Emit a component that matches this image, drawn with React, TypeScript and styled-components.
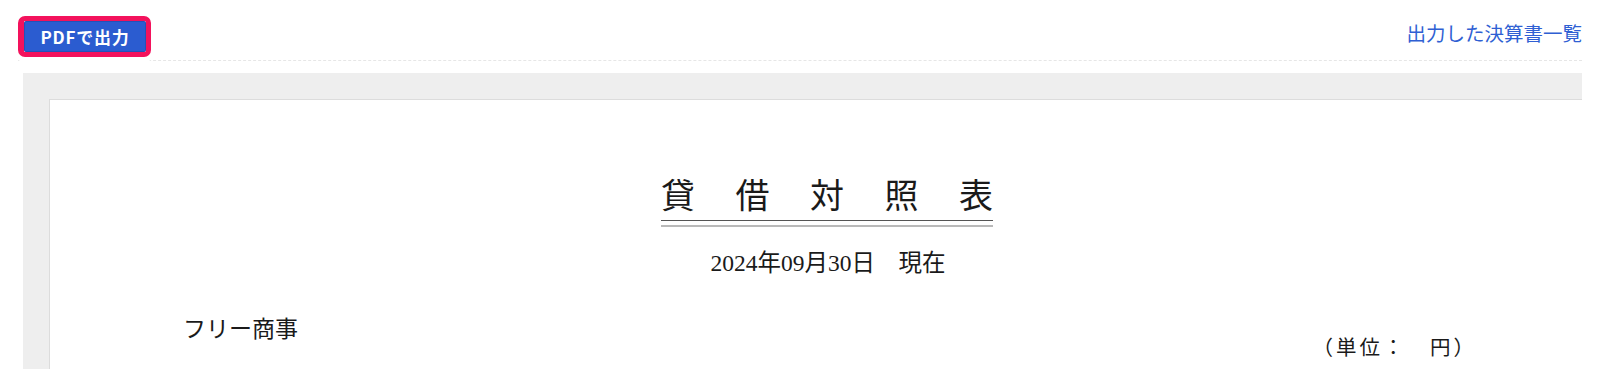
import React from "react";
import styled, { createGlobalStyle } from "styled-components";

const GlobalStyle = createGlobalStyle`
  html, body {
    margin: 0;
    padding: 0;
    background: #fff;
    font-family: "Noto Sans CJK JP", "Liberation Sans", sans-serif;
  }
`;

const Page = styled.div`
  padding: 16px 18px 0 18px;
  height: 369px;
  box-sizing: border-box;
  overflow: hidden;
`;

const Header = styled.div`
  display: flex;
  justify-content: space-between;
  align-items: center;
  height: 45px;
  border-bottom: 1px dashed #e6e6e6;
  box-sizing: border-box;
`;

const Highlight = styled.div`
  display: inline-flex;
  align-self: flex-start;
  border: 5px solid #f3125c;
  border-left-width: 6px;
  border-radius: 7px;
  box-shadow: 0 0 0 5px #fff;
  background: #fff;
`;

const PdfButton = styled.button`
  width: 122px;
  height: 31px;
  padding: 0;
  border: 1px solid #2352b8;
  border-radius: 2px;
  background: #2b5cd0;
  color: #fff;
  font-family: "Noto Sans CJK JP", sans-serif;
  font-weight: 700;
  font-size: 17px;
  letter-spacing: 0.8px;
  line-height: 1;
  cursor: pointer;
`;

const ListLink = styled.a`
  color: #2f5fd3;
  font-size: 19.5px;
  line-height: 1;
  text-decoration: none;
  margin-bottom: 10px;
  font-family: "Noto Sans CJK JP", sans-serif;
`;

const Viewer = styled.div`
  margin: 12px 0 0 5px;
  background: #eeeeee;
  padding: 26px 0 0 26px;
  overflow: hidden;
  height: 400px;
`;

const Sheet = styled.div`
  width: 1558px;
  height: 600px;
  background: #fff;
  border-top: 1px solid #dcdcdc;
  border-left: 1px solid #dcdcdc;
  box-sizing: border-box;
  padding: 80px 142px 0 133px;
  color: #1a1a1a;
  display: flex;
  flex-direction: column;
`;

const TitleWrap = styled.div`
  align-self: center;
  margin-left: 6px;
  border-bottom: 2px solid #b9b9b9;
  padding-bottom: 4px;
`;

const Title = styled.h1`
  margin: 0;
  display: flex;
  gap: 40.5px;
  font-size: 34px;
  font-weight: 400;
  line-height: 1;
  padding-bottom: 6px;
  border-bottom: 1px solid #555;
  font-family: "Liberation Serif", "Noto Sans CJK JP", serif;
`;

const DateLine = styled.p`
  align-self: center;
  margin: 25px 0 0 8px;
  font-size: 23.5px;
  line-height: 1;
  font-family: "Liberation Serif", "Noto Sans CJK JP", serif;
`;

const Company = styled.p`
  margin: 40px 0 0 0;
  font-size: 23px;
  line-height: 1;
`;

const Unit = styled.p`
  align-self: flex-end;
  margin: -1px -12px 0 0;
  font-size: 20.5px;
  letter-spacing: 3px;
  line-height: 1;
  font-family: "Liberation Serif", "Noto Sans CJK JP", serif;
`;

export default function App() {
  const title = ["貸", "借", "対", "照", "表"];
  return (
    <>
      <GlobalStyle />
      <Page>
        <Header>
          <Highlight>
            <PdfButton>PDFで出力</PdfButton>
          </Highlight>
          <ListLink href="#">出力した決算書一覧</ListLink>
        </Header>
        <Viewer>
          <Sheet>
            <TitleWrap>
              <Title>
                {title.map((c) => (
                  <span key={c}>{c}</span>
                ))}
              </Title>
            </TitleWrap>
            <DateLine>2024年09月30日　現在</DateLine>
            <Company>フリー商事</Company>
            <Unit>（単位：　円）</Unit>
          </Sheet>
        </Viewer>
      </Page>
    </>
  );
}
